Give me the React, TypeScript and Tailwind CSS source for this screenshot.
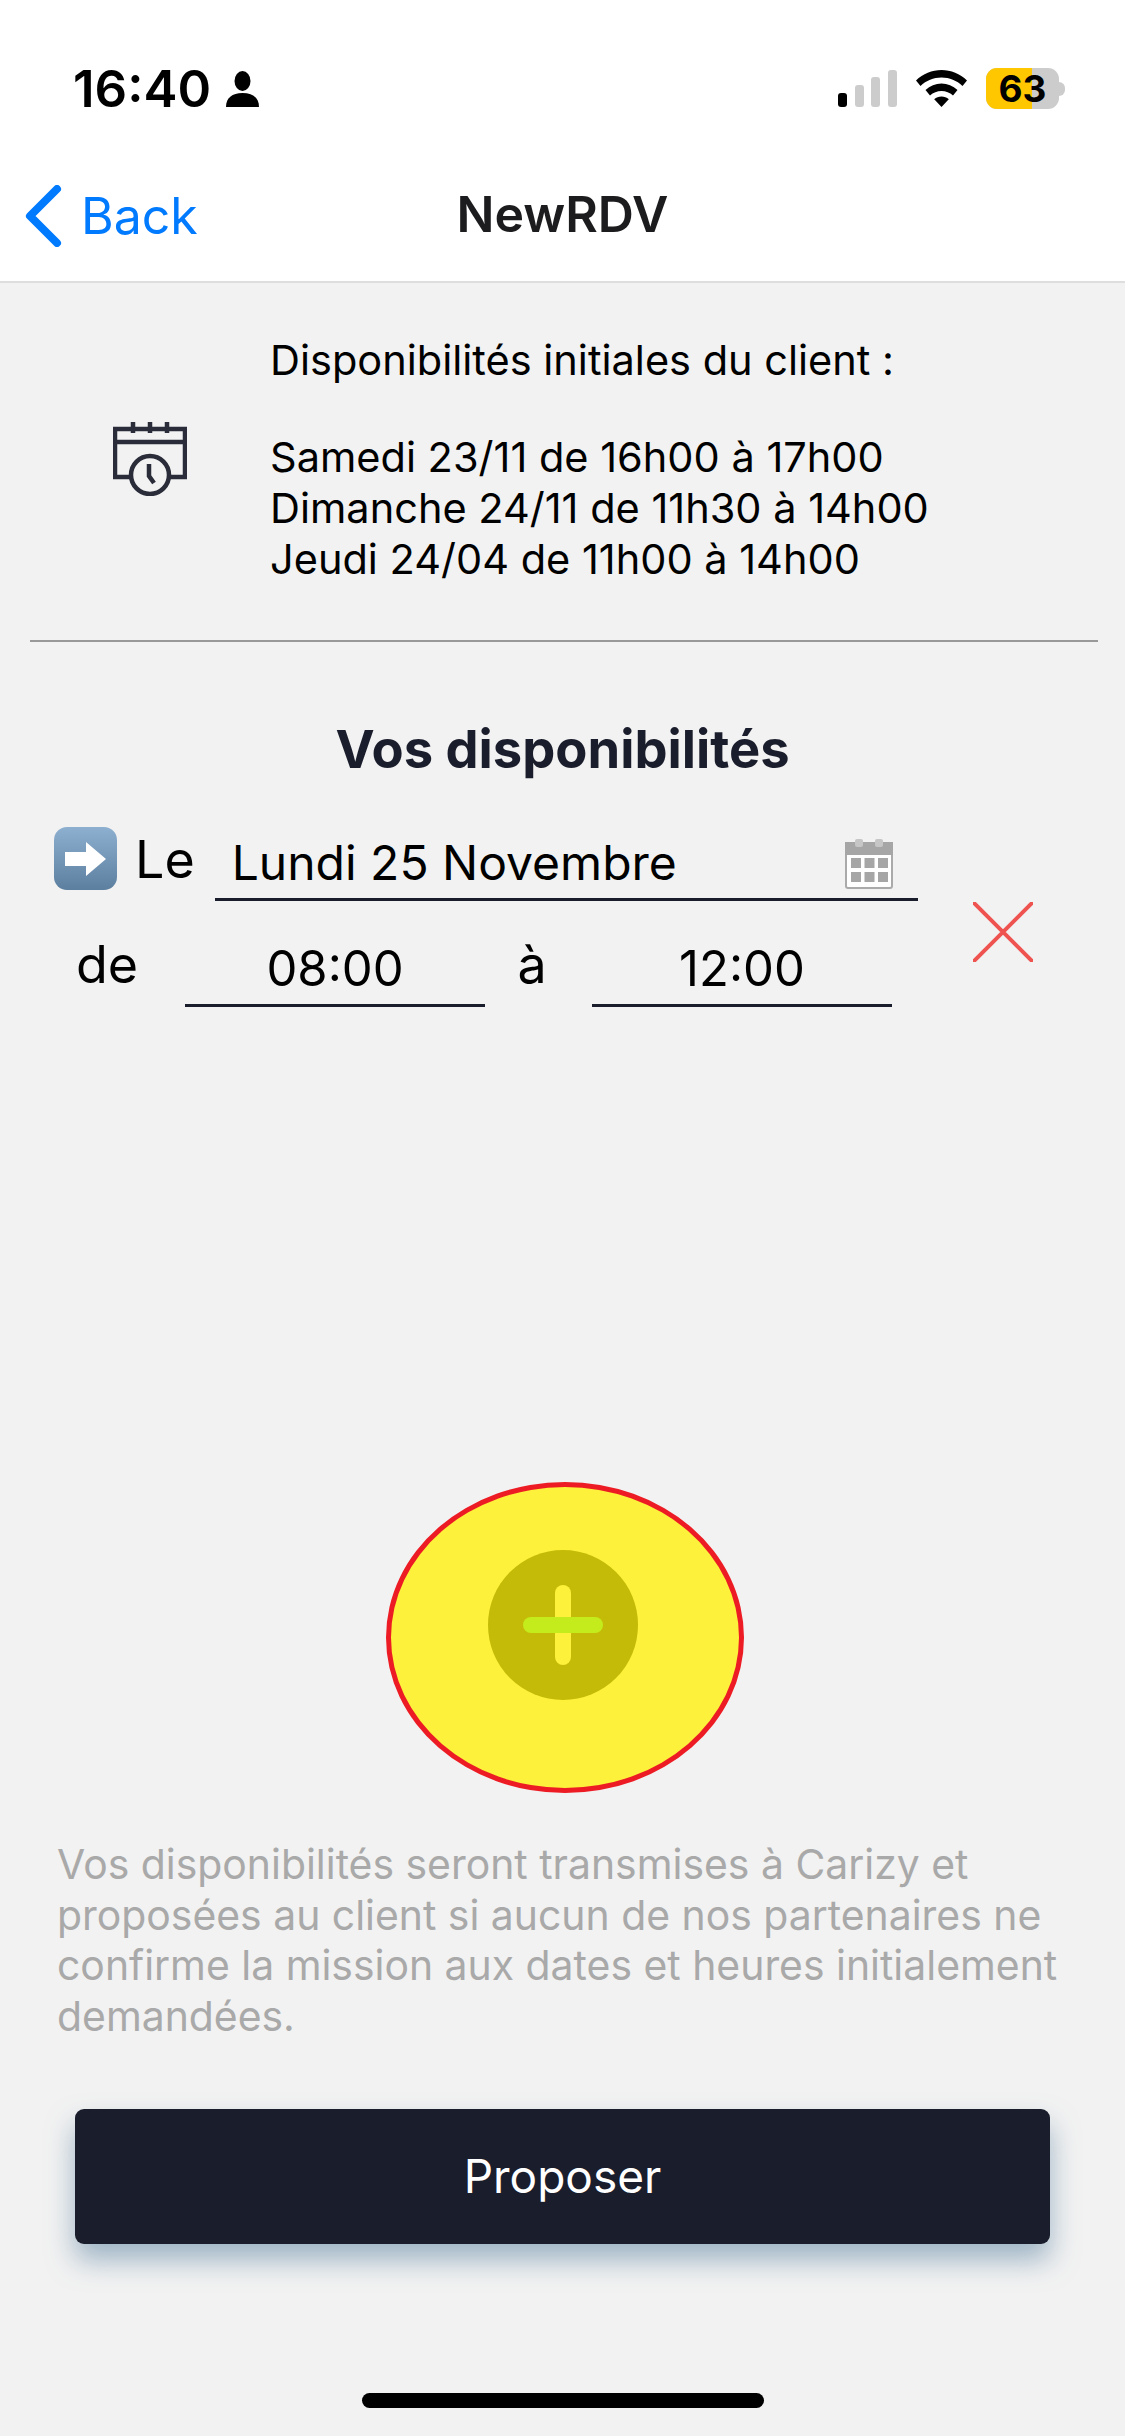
function PersonIcon() {
  return (
    <svg className="w-[33px] h-[36px]" viewBox="0 0 33 36" fill="currentColor">
      <ellipse cx="16.5" cy="10" rx="8" ry="10" />
      <path d="M0 36c0-9 6-14 16.5-14S33 27 33 36z" />
    </svg>
  );
}

function SignalIcon() {
  return (
    <svg className="w-[59px] h-[37px]" viewBox="0 0 59 37">
      <rect x="0" y="23" width="9" height="14" rx="3" fill="#000" />
      <rect x="17" y="15" width="9" height="22" rx="3" fill="#ccc" />
      <rect x="33" y="7" width="9" height="30" rx="3" fill="#ccc" />
      <rect x="50" y="0" width="9" height="37" rx="3" fill="#ccc" />
    </svg>
  );
}

function WifiIcon() {
  return (
    <svg className="w-[51px] h-[37px]" viewBox="0 0 51 37" fill="#000">
      <path d="M25.5 0C35 0 44 3.800 51 10.500L46.500 16C40.800 10.500 33.500 7.500 25.500 7.500S10.200 10.500 4.500 16L0 10.500C7 3.800 16 0 25.500 0z" />
      <path d="M25.500 13.500C31.500 13.500 37 15.800 41.500 20L37 25.500C33.800 22.500 29.800 21 25.500 21S17.200 22.500 14 25.500L9.500 20C14 15.800 19.500 13.500 25.500 13.500z" />
      <path d="M25.500 26.500C28.300 26.500 30.800 27.500 32.800 29.300L25.500 37L18.200 29.300C20.200 27.500 22.700 26.500 25.500 26.500z" />
    </svg>
  );
}

function BackChevron() {
  return (
    <svg className="w-[37px] h-[62px]" viewBox="0 0 37 62" fill="none">
      <path d="M32 4 5 31l27 27" stroke="#007aff" strokeWidth="8" strokeLinecap="round" strokeLinejoin="round" />
    </svg>
  );
}

function CalendarClockIcon() {
  return (
    <svg className="w-[74px] h-[74px]" viewBox="0 0 74 74" fill="none" stroke="#2a2c3a" strokeWidth="4.500">
      <path d="M17 55H2V7h70v48H57" />
      <path d="M2 20h70" />
      <path d="M20 0v11M37 0v11M54 0v11" />
      <circle cx="37" cy="53" r="19" />
      <path d="M36 42v12l5 7" />
    </svg>
  );
}

function ArrowEmoji() {
  return (
    <svg className="w-[63px] h-[63px] shrink-0" viewBox="0 0 63 63">
      <defs>
        <linearGradient id="arrowBg" x1="0" y1="0" x2="0" y2="1">
          <stop offset="0" stopColor="#8eb0d0" />
          <stop offset="1" stopColor="#5d7f9f" />
        </linearGradient>
      </defs>
      <rect x="0" y="0" width="63" height="63" rx="13" fill="url(#arrowBg)" />
      <path d="M11 25h21V15l20 17-20 17V39H11z" fill="#fff" />
    </svg>
  );
}

function SmallCalendar() {
  return (
    <svg className="w-[48px] h-[50px]" viewBox="0 0 48 50">
      <rect x="1" y="14" width="46" height="35" rx="2" fill="#fff" stroke="#aaa" strokeWidth="2" />
      <rect x="0" y="3" width="48" height="13" fill="#a6a6a6" />
      <rect x="10" y="0" width="8" height="8" rx="2" fill="#c6c6c6" />
      <rect x="30" y="0" width="8" height="8" rx="2" fill="#c6c6c6" />
      <g fill="#a6a6a6">
        <rect x="6" y="19" width="10" height="10" />
        <rect x="19.500" y="19" width="10" height="10" />
        <rect x="33" y="19" width="10" height="10" />
        <rect x="6" y="33" width="10" height="10" />
        <rect x="19.500" y="33" width="10" height="10" />
        <rect x="33" y="33" width="10" height="10" />
      </g>
    </svg>
  );
}

// square ends on the cross, clipped by the viewBox
function DeleteCross({ className }: { className?: string }) {
  return (
    <svg className={className} viewBox="0 0 60 60" fill="none" stroke="#ef5350" strokeWidth="4">
      <path d="M-3-3 63 63M63-3-3 63" />
    </svg>
  );
}

export default function App() {
  return (
    <div className="w-[1125px] h-[2436px] flex flex-col bg-[#f2f2f2] font-['Inter',sans-serif] overflow-hidden">
      {/* top bar */}
      <div className="h-[283px] bg-white border-b-2 border-[#dedede] shrink-0">
        <div className="h-[150px] flex items-start justify-between pt-[68px] pl-[73px] pr-[60px]">
          <div className="flex items-center gap-[15px] h-[41px]">
            <span className="text-[51px] leading-[41px] font-semibold text-black">16:40</span>
            <PersonIcon />
          </div>
          <div className="flex items-center gap-[19px] h-[41px]">
            <SignalIcon />
            <WifiIcon />
            <div className="flex items-center">
              <div className="relative w-[73px] h-[41px] rounded-[11px] bg-[#cccccc] flex items-center justify-center">
                <div className="absolute left-0 top-0 bottom-0 w-[46px] rounded-l-[11px] bg-[#ffc700]" />
                <span className="relative text-[37px] leading-[41px] font-bold text-black">63</span>
              </div>
              <div className="w-[6px] h-[14px] rounded-r-full bg-[#cccccc]" />
            </div>
          </div>
        </div>
        <div className="relative h-[131px] flex items-start justify-center pt-[34px]">
          <div className="absolute left-[25px] top-[35px] flex items-start gap-[19px]">
            <BackChevron />
            <span className="text-[50px] leading-[60px] text-[#007aff] mt-[1px]">Back</span>
          </div>
          <span className="text-[50px] leading-[60px] font-semibold text-[#1c1c1e]">NewRDV</span>
        </div>
      </div>

      {/* client availability */}
      <div className="ml-[30px] mr-[27px] flex flex-col border-b-2 border-[#999999] pb-[55px] pt-[52px]">
        <div className="flex items-start">
          <div className="w-[240px] pl-[83px] pt-[87px]">
            <CalendarClockIcon />
          </div>
          <div className="text-[41.500px] leading-[51px] text-black">
            <p>Disponibilités initiales du client :</p>
            <div className="mt-[46px]">
              <p>Samedi 23/11 de 16h00 à 17h00</p>
              <p>Dimanche 24/11 de 11h30 à 14h00</p>
              <p>Jeudi 24/04 de 11h00 à 14h00</p>
            </div>
          </div>
        </div>
      </div>

      <h2 className="mt-[77px] text-center text-[52.500px] leading-[60px] font-bold text-[#1a1d2b]">Vos disponibilités</h2>

      {/* slot */}
      <div className="mt-[48px] flex flex-col">
        <div className="flex items-start pl-[54px]">
          <ArrowEmoji />
          <span className="ml-[18px] mt-[3px] text-[52px] leading-[60px] text-black">Le</span>
          <div className="ml-[20px] w-[703px] h-[74px] border-b-[3px] border-[#1a1d2b] flex items-start justify-between pl-[17px] pr-[25px]">
            <span className="text-[48px] leading-[60px] text-black mt-[6px]">Lundi 25 Novembre</span>
            <div className="mt-[12px]">
              <SmallCalendar />
            </div>
          </div>
        </div>
        <div className="relative flex items-start pl-[76px] mt-[33px]">
          <span className="w-[109px] mt-[1px] text-[52px] leading-[60px] text-black">de</span>
          <div className="w-[300px] h-[73px] border-b-[3px] border-[#1a1d2b] text-center text-[49px] leading-[60px] text-black pt-[5px]">08:00</div>
          <span className="w-[94px] mr-[13px] mt-[1px] text-center text-[52px] leading-[60px] text-black">à</span>
          <div className="w-[300px] h-[73px] border-b-[3px] border-[#1a1d2b] text-center text-[49px] leading-[60px] text-black pt-[5px]">12:00</div>
          <DeleteCross className="absolute left-[973px] top-[-32px] w-[60px] h-[60px]" />
        </div>
      </div>

      {/* add button */}
      <div className="mt-[475px] relative w-[358px] h-[311px] ml-[386px] rounded-[50%] bg-[#fdf13b] border-[5px] border-[#ed1c24]">
        <div className="absolute left-[97px] top-[63px] w-[150px] h-[150px] rounded-full bg-[#c4bb08] flex items-center justify-center">
          <div className="relative w-[80px] h-[80px]">
            <div className="absolute left-[32px] top-0 w-[16px] h-[80px] rounded-full bg-[#fdf13b]" />
            <div className="absolute left-0 top-[32px] w-[80px] h-[16px] rounded-full bg-[#c4ec1d]" />
          </div>
        </div>
      </div>

      <p className="mt-[46px] mx-[57px] text-[40.900px] leading-[50.500px] text-[#a9a9a9]">
        Vos disponibilités seront transmises à Carizy et proposées au client si aucun de nos partenaires ne confirme la mission aux dates et heures initialement demandées.
      </p>

      <button className="mt-[68px] mx-[75px] h-[135px] shrink-0 rounded-[9px] bg-[#1a1d2b] text-white text-[46px] shadow-[0_16px_28px_rgba(90,130,160,0.55)]">
        Proposer
      </button>

      <div className="mt-[149px] mx-auto w-[402px] h-[15px] shrink-0 rounded-full bg-black" />
    </div>
  );
}
